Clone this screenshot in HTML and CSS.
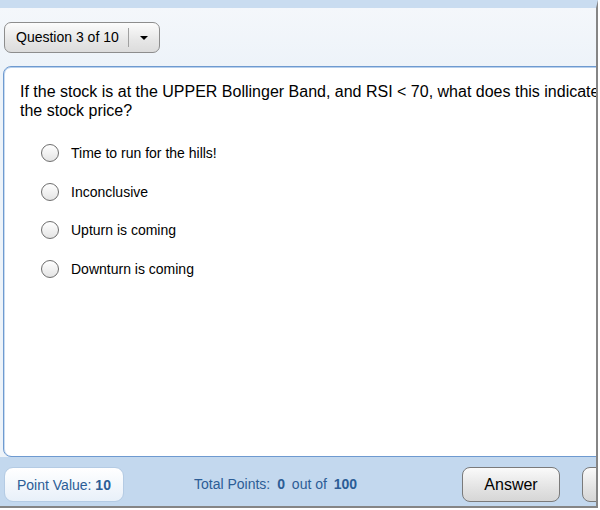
FILE: index.html
```html
<!DOCTYPE html>
<html lang="en">
<head>
  <meta charset="UTF-8">
  <title>Quiz</title>
  <link rel="stylesheet" href="styles.css">
</head>
<body>
  <div class="window">
    <div class="stage">
      <div class="toolbar">
        <button class="question-picker">
          <span class="picker-label">Question 3 of 10</span>
          <span class="picker-arrow"></span>
        </button>
      </div>

      <div class="card">
        <p class="question">If the stock is at the UPPER Bollinger Band, and RSI &lt; 70, what does this indicate for the stock price?</p>
        <ul class="options">
          <li class="option"><span class="radio"></span>Time to run for the hills!</li>
          <li class="option"><span class="radio"></span>Inconclusive</li>
          <li class="option"><span class="radio"></span>Upturn is coming</li>
          <li class="option"><span class="radio"></span>Downturn is coming</li>
        </ul>
      </div>

      <div class="footer">
        <div class="point-value">Point Value: <b>10</b></div>
        <div class="total-points">Total Points: <b>0</b> out of <b>100</b></div>
        <div class="spacer"></div>
        <button class="button">Answer</button>
        <button class="button">Next</button>
      </div>
    </div>
  </div>
</body>
</html>
```

FILE: styles.css
```css
body {
  margin: 0;
  background-color: #ffffff;
  font-family: 'Liberation Sans', Arial, sans-serif;
  color: #000000;
}

.window {
  width: 596px;
  height: 498px;
  overflow: hidden;
  border-top: 8px solid #c9dcf0;
  border-right: 2px solid #858585;
  border-bottom: 2px solid #858585;
  background: linear-gradient(#f4f7fb, #edf3f9 60px);
}

.stage {
  width: 680px;
  display: flex;
  flex-direction: column;
  height: 100%;
}

.toolbar {
  padding: 14px 0 0 4px;
  height: 46px;
  box-sizing: border-box;
}

.question-picker {
  display: flex;
  align-items: center;
  width: 156px;
  height: 31px;
  padding: 0;
  border: 1px solid #8d8d8d;
  border-radius: 7px;
  background: linear-gradient(#fcfcfc, #e6e6e6 60%, #dcdcdc);
  font-family: inherit;
  font-size: 14px;
  color: #000;
}

.picker-label {
  padding: 0 0 0 11px;
  width: 112px;
  text-align: left;
  border-right: 1px solid #a0a0a0;
  line-height: 19px;
}

.picker-arrow {
  margin-left: 11px;
  width: 0;
  height: 0;
  border-left: 4px solid transparent;
  border-right: 4px solid transparent;
  border-top: 4px solid #000;
}

.card {
  width: 650px;
  margin: 12px 0 0 3px;
  height: 391px;
  flex-shrink: 0;
  box-sizing: border-box;
  padding: 15px 16px 0;
  background-color: #ffffff;
  border: 1px solid #6e9ad0;
  border-radius: 8px 0 0 8px;
  box-shadow: inset 0 1px 0 #b8d0ec, inset 1px 0 0 #c9dbef;
}

.question {
  margin: 0;
  font-size: 16px;
  line-height: 19px;
}

.options {
  list-style: none;
  margin: 14px 0 0;
  padding: 0 0 0 21px;
}

.option {
  display: flex;
  align-items: center;
  height: 38.5px;
  font-size: 14px;
}

.radio {
  width: 16px;
  height: 16px;
  margin-right: 12px;
  border: 1.5px solid #6e6e6e;
  border-radius: 50%;
  background: linear-gradient(#ffffff, #e4e4e4);
}

.footer {
  flex: 1;
  display: flex;
  align-items: flex-end;
  padding: 0 0 4px 4px;
  background-color: #c3d8ee;
  color: #2c5d96;
  font-size: 14px;
}

.point-value {
  width: 120px;
  height: 35px;
  box-sizing: border-box;
  padding: 1px 0 0 12px;
  line-height: 33px;
  border: 1px solid #b4cbe4;
  border-radius: 9px;
  background: linear-gradient(#ffffff, #e8f0f9);
}

.total-points {
  margin-left: 70px;
  padding-top: 1px;
  line-height: 35px;
}

.total-points b {
  margin: 0 3px;
}

.spacer {
  flex: 1;
}

.button {
  flex-shrink: 0;
  width: 98px;
  height: 35px;
  margin-right: 22px;
  border: 1px solid #7a7a7a;
  border-radius: 8px;
  background: linear-gradient(#fafafa, #e3e3e3 60%, #d6d6d6);
  font-family: inherit;
  font-size: 16px;
  color: #000;
}

.button:last-child {
  margin-right: 0;
}
```
